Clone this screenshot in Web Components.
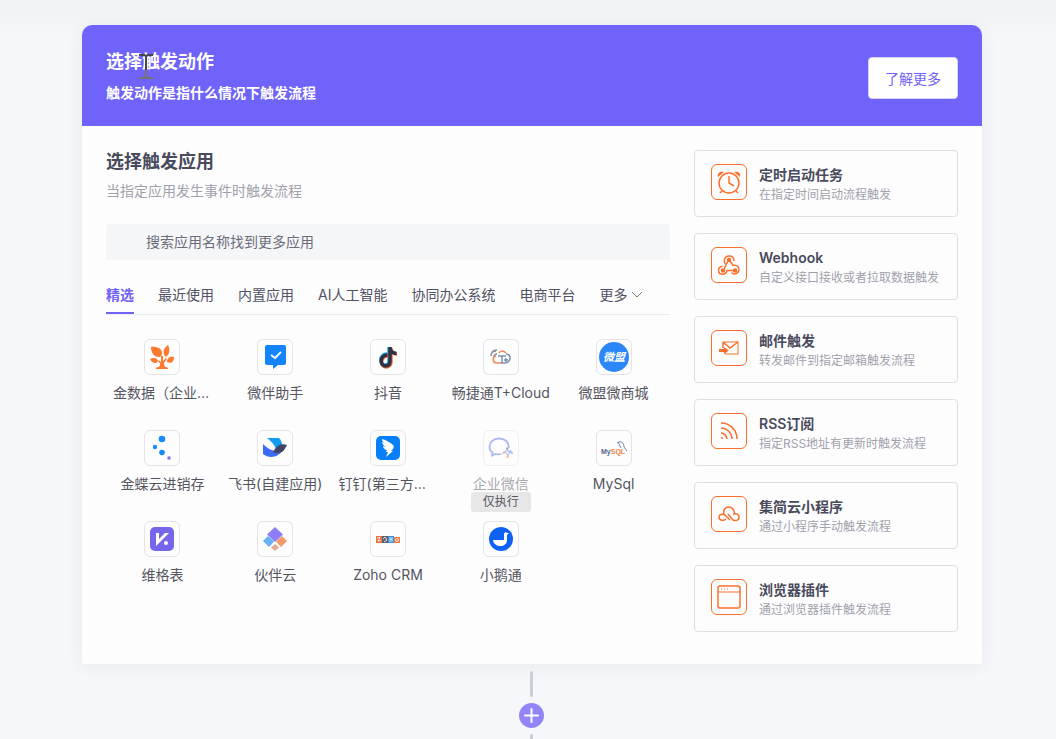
<!DOCTYPE html>
<html lang="zh-CN">
<head>
<meta charset="utf-8">
<title>选择触发动作</title>
<style>
html{height:100%}
body{margin:0;min-height:100%;background:linear-gradient(#f1f2f5,#f6f7fb 40px);font-family:Inter,"Noto Sans CJK SC",sans-serif;font-size:14px;color:#55555e}
</style>
</head>
<body>
<trigger-page>
  <trigger-panel>
    <panel-header slot="header" heading="选择触发动作" note="触发动作是指什么情况下触发流程">了解更多</panel-header>
    <app-picker slot="main" heading="选择触发应用" note="当指定应用发生事件时触发流程">
      <app-search slot="search"></app-search>
      <app-tabs slot="tabs"></app-tabs>
      <app-tile icon="jinshuju">金数据（企业版）</app-tile>
      <app-tile icon="weiban">微伴助手</app-tile>
      <app-tile icon="douyin">抖音</app-tile>
      <app-tile icon="tcloud">畅捷通T+Cloud</app-tile>
      <app-tile icon="weimob">微盟微商城</app-tile>
      <app-tile icon="kingdee">金蝶云进销存</app-tile>
      <app-tile icon="feishu">飞书(自建应用)</app-tile>
      <app-tile icon="dingding">钉钉(第三方应用)</app-tile>
      <app-tile icon="wecom" badge="仅执行">企业微信</app-tile>
      <app-tile icon="mysql">MySql</app-tile>
      <app-tile icon="vika">维格表</app-tile>
      <app-tile icon="huoban">伙伴云</app-tile>
      <app-tile icon="zoho">Zoho CRM</app-tile>
      <app-tile icon="xiaoe">小鹅通</app-tile>
    </app-picker>
    <trigger-card slot="side" icon="clock" heading="定时启动任务">在指定时间启动流程触发</trigger-card>
    <trigger-card slot="side" icon="webhook" heading="Webhook">自定义接口接收或者拉取数据触发</trigger-card>
    <trigger-card slot="side" icon="mail" heading="邮件触发">转发邮件到指定邮箱触发流程</trigger-card>
    <trigger-card slot="side" icon="rss" heading="RSS订阅">指定RSS地址有更新时触发流程</trigger-card>
    <trigger-card slot="side" icon="cloud" heading="集简云小程序">通过小程序手动触发流程</trigger-card>
    <trigger-card slot="side" icon="browser" heading="浏览器插件">通过浏览器插件触发流程</trigger-card>
  </trigger-panel>
  <flow-connector></flow-connector>
</trigger-page>

<script>
const ICONS = {
  jinshuju: '<g fill="#fd7a2e"><path d="M7 8c5-1 11 1 11 6 0 2-1 4-3 4-5 0-8-4-8-10z"/><path d="M24 6c2 4 2 9-2 12-4-3-3-9 2-12z"/><path d="M6 20c4-2 7-1 8 2-1 3-6 3-8-2z"/><path d="M30 18c0 5-3 7-7 5 0-4 3-6 7-5z"/><path d="M12 30v-1.500c3 0 4-1 4-4L14 22l1-.8 2 2V17h2v5l3-3 1 1-3 4c0 3 1 4.500 4 4.500V30z"/></g>',
  weiban: '<path fill="#1484fb" d="M10 6h17a2 2 0 0 1 2 2v16a2 2 0 0 1-2 2h-6l-5 4v-4h-6a2 2 0 0 1-2-2V8a2 2 0 0 1 2-2z"/><path d="m14 16 4 3 6-6" fill="none" stroke="#fff" stroke-width="1.800"/>',
  douyin: '<g fill="none" stroke-width="3.500"><path stroke="#2ba4e8" d="M17 15c-8 0-8 11-2 11 3 0 4-2 4-4V8c0 4 3 6 7 6"/><path stroke="#ff703a" d="M18 17c-8 0-8 11-2 11 3 0 5-2 5-5V9c0 4 3 6 6 6"/><path stroke="#2f3040" d="M17.500 16c-8 0-8 11-2 11 3 0 4.500-2 4.500-5V8c0 4 3 6.500 6.500 6.500"/></g>',
  tcloud: '<g fill="none" stroke-width="1.500"><path stroke="#8b8fa0" d="M8 17c0-3 2-5 5-5M11 18c0-2 1-3 3-3M9 13c1-1 3-2 5-2"/><path stroke="#ef8654" d="M13 17c-4 1-4 7 1 7h4M16 14c1-2 4-3 7 0"/><path stroke="#7d8fb3" d="M23 15c4 0 5 4 3 7-1 2-2 2-4 2h-4M15 17h8M19 17v7M21 21h4M23 19v4"/></g>',
  weimob: '<circle cx="18" cy="18" r="15" fill="#2b87f8"/><text x="18" y="22" text-anchor="middle" font-family="Noto Sans CJK SC,sans-serif" font-size="11" font-weight="700" font-style="italic" fill="#fff">微盟</text>',
  kingdee: '<g fill="#188bfa"><circle cx="18" cy="9" r="3.300"/><circle cx="11" cy="17" r="2.200"/><circle cx="18" cy="22.500" r="2.800"/></g><circle cx="25" cy="28" r="1.800" fill="#8b6cf3"/>',
  feishu: '<path fill="#159cf0" d="M10 8h12c2 2 3 4 3 7l-6 4c-2-5-5-8-9-11z"/><path fill="#3b6cf5" d="M6 14c6 6 12 9 20 5-4 9-14 10-20 5z"/><path fill="#414563" d="M16 22c4-7 8-9 14-7-2 3-3 8-9 8-2 0-4 0-5-1z"/>',
  dingding: '<rect x="6" y="6" width="24" height="24" rx="5" fill="#087ff7"/><path fill="#fff" d="M12 9c4 1 9 4 11 6 1 1 1 2 0 4l-2 2h2l-7 6 2-5h-2l1-2c-2 0-4-2-4-4l3 1c-2-1-4-3-4-5l3 1c-2-1-3-2-3-4z"/>',
  wecom: '<path fill="none" stroke="#5f76e8" stroke-width="1.800" d="M25.500 18c1-6-4-9.500-9.500-9.500S6.500 12 6.500 17c0 2.500 1.500 4.500 3 5.500l-.5 3 3.500-1.500c2 .6 4 .5 6 0"/><g stroke-width="2.200" stroke-linecap="round"><path stroke="#6c88f0" d="m27 21 2 2"/><path stroke="#f4823f" d="m20.500 23 1-1M25 26l-.5 1"/><path stroke="#555b7c" d="m24 18.500.5.5"/><path stroke="#6c88f0" fill="none" stroke-width="1.200" d="m22 22 2-2 3 3-2 2z"/></g>',
  mysql: '<text x="5" y="24" font-family="Liberation Sans,sans-serif" font-size="7" font-weight="700" fill="#57678b">My<tspan fill="#f18242">SQL</tspan></text><path d="M21 13c4-3 7 0 7 4l3 4M22 12l2 4 1 2" fill="none" stroke="#6d84aa"/>',
  vika: '<rect x="6" y="6" width="24" height="24" rx="5" fill="#7666eb"/><path fill="#fff" d="M12 12h3v6l6-6h4L12 25z"/><circle cx="22" cy="22" r="2" fill="#fff"/>',
  huoban: '<path fill="#8d7df6" d="m18 6 8 7.500-8 7.500-8-7.500z"/><path fill="#66b0f4" d="m11 15 6 5.500-5 5.500-6-6z"/><path fill="#f49a69" d="m25 15 5 5-6 6-5-5.500z"/><path fill="#e6aa91" d="m18 23 4 3.500-4 3.500-4-3.500z"/>',
  zoho: '<path fill="#ed7343" d="M6 15h6v7H6z"/><path fill="#3b91df" d="M18 15h6v7h-6z"/><path fill="#f17a43" d="M24 16h6v6h-6z"/><path fill="#5e6170" d="M12 15h6v7h-6z"/><g fill="none" stroke="#fff" stroke-width=".8"><path d="m7 17 3-.5L8 20l3-.5M13 18l2-2 2 3-3 2M20 16v5M22 16v5M20 18h2"/><circle cx="27" cy="19" r="1.500"/></g>',
  xiaoe: '<circle cx="18" cy="18" r="12" fill="#0d62f5"/><path fill="#fff" d="M10 19h11v-6c0-2 3-2 3-1h2l-2 2v5c0 8-13 8-14 0z"/>',
  clock: '<circle cx="18" cy="19" r="10"/><path d="M18 12v7l5 3M11 27l-2 2M25 27l2 2"/><path fill="currentColor" stroke="none" d="M7 13c-1-4 2-6 6-5zM29 13c1-4-2-6-6-5z"/>',
  webhook: '<g fill="currentColor"><circle cx="18" cy="13" r="1.500"/><circle cx="12" cy="23.500" r="1.500"/><circle cx="24" cy="23.500" r="1.500"/></g><path d="m17 14-4 8M19 14l3 4.500c5-1 7 3 5.500 6-2 3-5 3-7 1M14.500 17c-2.500-3-1-8 3.500-8 3 0 5 2 5 5M23 23.500h-7c-1 5-8.500 5-8.500 0 0-2.500 1.500-4 4-4"/>',
  mail: '<path stroke="#f1a06f" d="M12 12h15v12H14"/><path d="m12 12 7 6 8-6M12 12v6"/><path fill="currentColor" stroke="none" d="M8 19h5v-2l5 3.500-5 3.500v-2H8z"/>',
  rss: '<path d="M10 10c9 0 16 7 16 16M10 15c6 0 11 5 11 11M10 20c3 0 6 3 6 6"/><circle cx="11" cy="25" r="1" fill="currentColor" stroke="none"/>',
  cloud: '<path d="M13 18c-1-4 1-7 5-7 3 0 6 3 5 7 3-1 5 1 5 3 0 4-4 4-6 3l-5-6M19 24l-5-5c-3-2-6 0-6 2 0 4 5 4 7 2"/>',
  browser: '<rect x="7" y="7" width="22" height="22" rx="2"/><path stroke-width="1" d="M7 13h22M10 10h1M13 10h1M16 10h1"/>'
};

function define(name, render) {
  customElements.define(name, class extends HTMLElement {
    connectedCallback() {
      if (this.shadowRoot) return;
      const template = document.createElement('template');
      template.innerHTML = render(this);
      this.attachShadow({mode: 'open'}).append(template.content.cloneNode(true));
    }
  });
}

define('trigger-page', () => `<style>
  :host{display:flex;flex-direction:column;align-items:center;padding:25px 20px 0 28px}
</style><slot></slot>`);

define('trigger-panel', () => `<style>
  :host{display:block;box-sizing:border-box;width:100%;max-width:900px;border-radius:10px 10px 0 0;background:#fdfdfe;box-shadow:0 2px 20px #0000000f}
  .body{display:grid;grid-template-columns:minmax(0,1fr) 264px;gap:24px;padding:24px 24px 32px}
  aside{display:flex;flex-direction:column;gap:16px}
</style><slot name="header"></slot>
<div class="body"><main><slot name="main"></slot></main><aside><slot name="side"></slot></aside></div>`);

define('panel-header', el => `<style>
  :host{display:flex;align-items:center;justify-content:space-between;padding:24px 24px 20px;border-radius:10px 10px 0 0;background:#7063f9;color:#fff}
  h1{position:relative;margin:0;font-size:18px;line-height:26px;font-weight:700}
  p{margin:8px 0 0;font-weight:700;line-height:20px;padding-bottom:3px}
  button{font:inherit;height:42px;padding:0 16px;border:1px solid #d5d3f4;border-radius:4px;background:#fff;color:#7063f9}
  svg{position:absolute;left:33px;top:5px}
</style><div><h1>${el.getAttribute('heading')}<svg width="14" height="25" fill="none" stroke-width="2" aria-hidden="true"><path stroke="#46464d" d="M0 1h5l2 1 2-1h5M7 2v14"/><path stroke="#777469" d="M7 16v7M0 24h5l2-1 2 1h5"/></svg></h1><p>${el.getAttribute('note')}</p></div><button type="button"><slot></slot></button>`);

define('app-picker', el => `<style>
  :host{display:block}
  h2{margin:0;font-size:18px;line-height:24px;font-weight:600;color:#494a5b}
  p{margin:7px 0 23px;line-height:20px;color:#a1a1ab}
  .apps{display:grid;grid-template-columns:repeat(5,minmax(0,1fr));row-gap:27px;padding-top:24px}
</style><h2>${el.getAttribute('heading')}</h2><p>${el.getAttribute('note')}</p>
<slot name="search"></slot><slot name="tabs"></slot><div class="apps"><slot></slot></div>`);

define('app-search', () => `<style>
  :host{display:block;margin-bottom:20px}
  input{display:block;box-sizing:border-box;width:100%;height:36px;padding:0 40px 1px;border:0;border-radius:4px;background:#f5f6f8;font:inherit}
  input::placeholder{color:#6c6c78;opacity:1}
</style><input type="search" aria-label="搜索应用" placeholder="搜索应用名称找到更多应用">`);

define('app-tabs', () => `<style>
  :host{display:flex;gap:24px;border-bottom:1px solid #ebecef}
  button{display:flex;align-items:center;gap:4px;height:34px;margin:0;padding:0 0 4px;border:0;background:none;font:inherit;line-height:20px;color:#515163;white-space:nowrap}
  .active{box-shadow:0 -2px #7063f9 inset;color:#7063f9;font-weight:700}
</style><button type="button" class="active">精选</button>${['最近使用', '内置应用', 'AI人工智能', '协同办公系统', '电商平台'].map(t => `<button type="button">${t}</button>`).join('')}<button type="button"><span>更多</span><svg width="12" height="8" fill="none" stroke="#777" aria-hidden="true"><path d="m1 1 5 5 5-5"/></svg></button>`);

define('app-tile', el => `<style>
  :host{display:block;min-width:0}
  button{position:relative;display:flex;flex-direction:column;align-items:center;gap:8px;width:100%;padding:0;border:0;background:none;font:inherit;color:#55555e}
  .logo{display:flex;box-sizing:border-box;width:36px;height:36px;border:1px solid #e4e4e7;border-radius:6px;overflow:hidden}
  .logo svg{flex:none;margin:-1px}
  .name{box-sizing:border-box;max-width:100%;padding:0 7px;line-height:20px;overflow:hidden;text-overflow:ellipsis;white-space:nowrap}
  .off .logo,.off .name{opacity:.5}
  .badge{position:absolute;top:62px;width:60px;border-radius:3px;background:#e7e7e8;font-size:12px;line-height:20px;color:#55555e}
</style><button type="button" class="${el.hasAttribute('badge') ? 'off' : ''}"><span class="logo"><svg width="36" height="36" viewBox="0 0 36 36" aria-hidden="true">${ICONS[el.getAttribute('icon')]}</svg></span><span class="name"><slot></slot></span>${el.hasAttribute('badge') ? `<span class="badge">${el.getAttribute('badge')}</span>` : ''}</button>`);

define('trigger-card', el => `<style>
  :host{display:block}
  button{display:flex;align-items:flex-start;gap:12px;box-sizing:border-box;width:100%;height:67px;padding:13px 16px;border:1px solid #dedfe4;border-radius:4px;background:#fdfdfe;font:inherit;text-align:left}
  svg{flex:none;box-sizing:border-box;border:1px solid #fb702c;border-radius:6px;color:#fb702c}
  .text{display:flex;flex-direction:column;padding-top:1px;white-space:nowrap}
  strong{font-size:14px;font-weight:600;line-height:20px;color:#494a5b}
  small{font-size:12px;line-height:20px;color:#a1a1ab}
</style><button type="button"><svg width="36" height="36" viewBox="1 1 34 34" fill="none" stroke="currentColor" stroke-width="1.500" aria-hidden="true">${ICONS[el.getAttribute('icon')]}</svg><span class="text"><strong>${el.getAttribute('heading')}</strong><small><slot></slot></small></span></button>`);

define('flow-connector', () => `<style>
  :host{display:flex;flex-direction:column;align-items:center;gap:6px;height:68px;margin-top:7px;padding-right:2px;overflow:hidden}
  i{flex:none;width:3px;height:26px;border-radius:2px;background:#cdcdd6}
  button{flex:none;width:25px;height:25px;padding:0;border:0;border-radius:50%;background:#9185f8}
  svg{display:block}
</style><i></i><button type="button" aria-label="添加步骤"><svg width="25" height="25" fill="none" stroke="#fff" stroke-width="2" stroke-linecap="round"><path d="M12.500 6v13M6 12.500h13"/></svg></button><i></i>`);
</script>
</body>
</html>
